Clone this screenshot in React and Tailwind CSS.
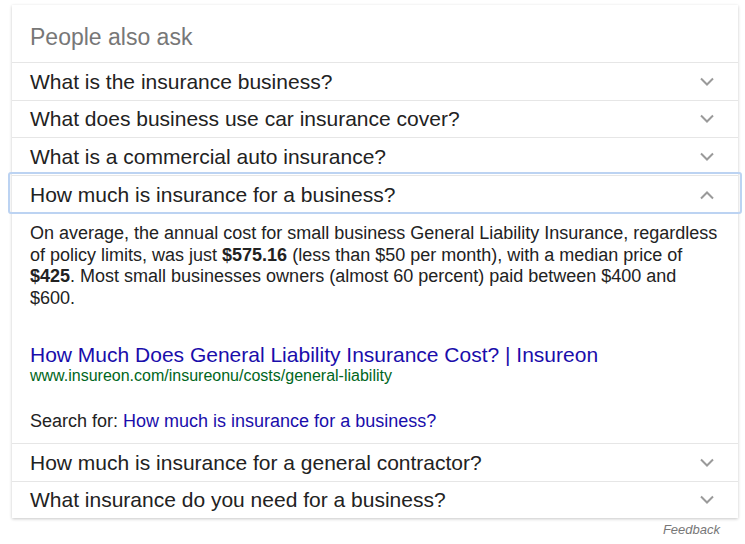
import React from "react";

const F = { fontFamily: '"Liberation Sans", Arial, Helvetica, sans-serif' };

function Chevron({ up }) {
  return (
    <svg width="16" height="10" viewBox="0 0 16 10" className="shrink-0">
      <path
        d={up ? "M2 8.5 L8 2.5 L14 8.5" : "M2 1.5 L8 7.5 L14 1.5"}
        fill="none"
        stroke="#9a9a9a"
        strokeWidth="2"
      />
    </svg>
  );
}

function Row({ q, h, up, focused }) {
  return (
    <div
      className={`relative flex items-center justify-between border-t border-[#e6e6e6] pl-[18px] pr-[23px] ${h}`}
    >
      {focused && (
        <div className="pointer-events-none absolute -left-[4px] -right-[4px] -top-[4px] -bottom-[1px] rounded-[3px] border-2 border-[#bcd3f2]" />
      )}
      <span className="text-[21px] text-[#222]">{q}</span>
      <Chevron up={up} />
    </div>
  );
}

export default function App() {
  return (
    <div style={F} className="min-h-[544px] w-[745px] bg-white pt-[5px]">
      <div className="ml-[12px] w-[726px] bg-white shadow-[0_1px_3px_rgba(0,0,0,0.22)]">
        <div className="h-[57px] pl-[18px] pt-[19px] text-[23px] leading-[26px] text-[#777]">
          People also ask
        </div>
        <Row q="What is the insurance business?" h="h-[38px]" />
        <Row q="What does business use car insurance cover?" h="h-[37px]" />
        <Row q="What is a commercial auto insurance?" h="h-[38px]" />
        <Row q="How much is insurance for a business?" h="h-[38px]" up focused />
        <div className="pl-[18px] pr-[10px] pt-[10px] pb-[11px]">
          <p className="whitespace-nowrap text-[18px] leading-[21.5px] text-[#222]">
            On average, the annual cost for small business General Liability Insurance, regardless
            <br />
            of policy limits, was just <b>$575.16</b> (less than $50 per month), with a median price of
            <br />
            <b>$425</b>. Most small businesses owners (almost 60 percent) paid between $400 and
            <br />
            $600.
          </p>
          <div className="mt-[34px] text-[21px] leading-[24px] text-[#1a0dab]">
            How Much Does General Liability Insurance Cost? | Insureon
          </div>
          <div className="text-[16px] leading-[18px] text-[#006621]">
            www.insureon.com/insureonu/costs/general-liability
          </div>
          <div className="mt-[25px] text-[18px] leading-[22px] text-[#222]">
            Search for: <span className="text-[#1a0dab]">How much is insurance for a business?</span>
          </div>
        </div>
        <Row q="How much is insurance for a general contractor?" h="h-[38px]" />
        <Row q="What insurance do you need for a business?" h="h-[37px]" />
      </div>
      <div className="ml-[12px] mt-[4px] w-[726px] pr-[18px] text-right text-[13px] italic leading-[16px] text-[#777]">
        Feedback
      </div>
    </div>
  );
}
